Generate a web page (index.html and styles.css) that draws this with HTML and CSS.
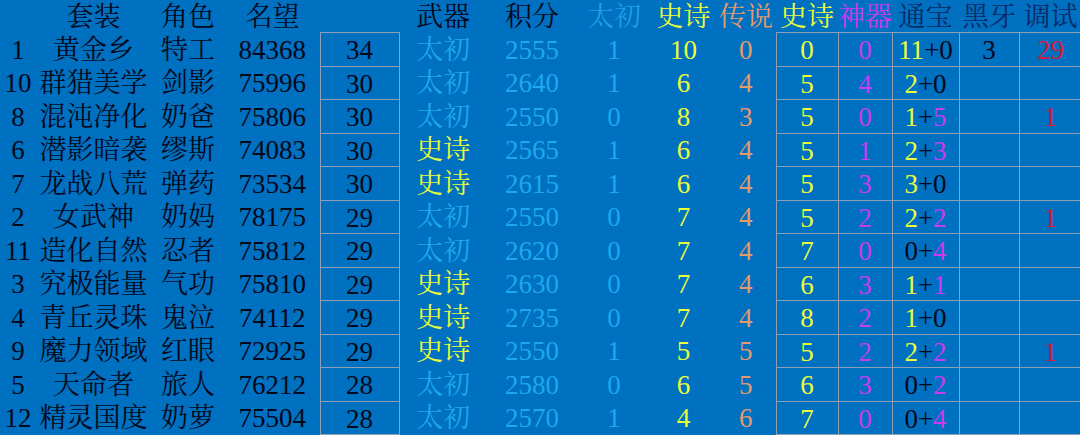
FILE: index.html
```html
<!DOCTYPE html>
<html lang="zh-CN">
<head>
<meta charset="utf-8">
<title>套装</title>
<link rel="stylesheet" href="styles.css">
</head>
<body>
<table class="sheet">
<colgroup>
<col class="c1"><col class="c2"><col class="c3"><col class="c4"><col class="c5"><col class="c6"><col class="c7"><col class="c8"><col class="c9"><col class="c10"><col class="c11"><col class="c12"><col class="c13"><col class="c14"><col class="c15">
</colgroup>
<thead>
<tr class="head">
<th></th><th>套装</th><th>角色</th><th>名望</th><th></th><th>武器</th><th>积分</th><th class="lbh">太初</th><th class="ye">史诗</th><th class="or">传说</th><th class="ye">史诗</th><th class="mg">神器</th><th class="nv">通宝</th><th class="nv">黑牙</th><th class="nv">调试</th>
</tr>
</thead>
<tbody>
<tr><td>1</td><td>黄金乡</td><td>特工</td><td>84368</td><td class="b">34</td><td class="lb">太初</td><td class="lb">2555</td><td class="lb">1</td><td class="ye">10</td><td class="or">0</td><td class="b ye">0</td><td class="b mg">0</td><td class="b"><span class="ye">11</span>+0</td><td class="b">3</td><td class="b rd">29</td></tr>
<tr><td>10</td><td>群猎美学</td><td>剑影</td><td>75996</td><td class="b">30</td><td class="lb">太初</td><td class="lb">2640</td><td class="lb">1</td><td class="ye">6</td><td class="or">4</td><td class="b ye">5</td><td class="b mg">4</td><td class="b"><span class="ye">2</span>+0</td><td class="b"></td><td class="b rd"></td></tr>
<tr><td>8</td><td>混沌净化</td><td>奶爸</td><td>75806</td><td class="b">30</td><td class="lb">太初</td><td class="lb">2550</td><td class="lb">0</td><td class="ye">8</td><td class="or">3</td><td class="b ye">5</td><td class="b mg">0</td><td class="b"><span class="ye">1</span>+<span class="mg">5</span></td><td class="b"></td><td class="b rd">1</td></tr>
<tr><td>6</td><td>潜影暗袭</td><td>缪斯</td><td>74083</td><td class="b">30</td><td class="ye">史诗</td><td class="lb">2565</td><td class="lb">1</td><td class="ye">6</td><td class="or">4</td><td class="b ye">5</td><td class="b mg">1</td><td class="b"><span class="ye">2</span>+<span class="mg">3</span></td><td class="b"></td><td class="b rd"></td></tr>
<tr><td>7</td><td>龙战八荒</td><td>弹药</td><td>73534</td><td class="b">30</td><td class="ye">史诗</td><td class="lb">2615</td><td class="lb">1</td><td class="ye">6</td><td class="or">4</td><td class="b ye">5</td><td class="b mg">3</td><td class="b"><span class="ye">3</span>+0</td><td class="b"></td><td class="b rd"></td></tr>
<tr><td>2</td><td>女武神</td><td>奶妈</td><td>78175</td><td class="b">29</td><td class="lb">太初</td><td class="lb">2550</td><td class="lb">0</td><td class="ye">7</td><td class="or">4</td><td class="b ye">5</td><td class="b mg">2</td><td class="b"><span class="ye">2</span>+<span class="mg">2</span></td><td class="b"></td><td class="b rd">1</td></tr>
<tr><td>11</td><td>造化自然</td><td>忍者</td><td>75812</td><td class="b">29</td><td class="lb">太初</td><td class="lb">2620</td><td class="lb">0</td><td class="ye">7</td><td class="or">4</td><td class="b ye">7</td><td class="b mg">0</td><td class="b">0+<span class="mg">4</span></td><td class="b"></td><td class="b rd"></td></tr>
<tr><td>3</td><td>究极能量</td><td>气功</td><td>75810</td><td class="b">29</td><td class="ye">史诗</td><td class="lb">2630</td><td class="lb">0</td><td class="ye">7</td><td class="or">4</td><td class="b ye">6</td><td class="b mg">3</td><td class="b"><span class="ye">1</span>+<span class="mg">1</span></td><td class="b"></td><td class="b rd"></td></tr>
<tr><td>4</td><td>青丘灵珠</td><td>鬼泣</td><td>74112</td><td class="b">29</td><td class="ye">史诗</td><td class="lb">2735</td><td class="lb">0</td><td class="ye">7</td><td class="or">4</td><td class="b ye">8</td><td class="b mg">2</td><td class="b"><span class="ye">1</span>+0</td><td class="b"></td><td class="b rd"></td></tr>
<tr><td>9</td><td>魔力领域</td><td>红眼</td><td>72925</td><td class="b">29</td><td class="ye">史诗</td><td class="lb">2550</td><td class="lb">1</td><td class="ye">5</td><td class="or">5</td><td class="b ye">5</td><td class="b mg">2</td><td class="b"><span class="ye">2</span>+<span class="mg">2</span></td><td class="b"></td><td class="b rd">1</td></tr>
<tr><td>5</td><td>天命者</td><td>旅人</td><td>76212</td><td class="b">28</td><td class="lb">太初</td><td class="lb">2580</td><td class="lb">0</td><td class="ye">6</td><td class="or">5</td><td class="b ye">6</td><td class="b mg">3</td><td class="b">0+<span class="mg">2</span></td><td class="b"></td><td class="b rd"></td></tr>
<tr><td>12</td><td>精灵国度</td><td>奶萝</td><td>75504</td><td class="b">28</td><td class="lb">太初</td><td class="lb">2570</td><td class="lb">1</td><td class="ye">4</td><td class="or">6</td><td class="b ye">7</td><td class="b mg">0</td><td class="b">0+<span class="mg">4</span></td><td class="b"></td><td class="b rd"></td></tr>
</tbody>
</table>
</body>
</html>
```
FILE: styles.css
```css
html, body {
  margin: 0;
  padding: 0;
  background: #0070c0;
  overflow: hidden;
}
body {
  width: 1080px;
  height: 435px;
}
.sheet {
  border-collapse: collapse;
  table-layout: fixed;
  width: 1082px;
  font-family: "Liberation Serif", "Noto Serif CJK SC", "Noto Sans CJK SC", serif;
  font-size: 27px;
  color: #03081a;
}
.c1 { width: 36px; }
.c2 { width: 115px; }
.c3 { width: 74px; }
.c4 { width: 95px; }
.c5 { width: 79px; }
.c6 { width: 88px; }
.c7 { width: 90px; }
.c8 { width: 74px; }
.c9 { width: 65px; }
.c10 { width: 60px; }
.c11 { width: 62px; }
.c12 { width: 54px; }
.c13 { width: 67px; }
.c14 { width: 60px; }
.c15 { width: 63px; }
th, td {
  padding: 0;
  text-align: center;
  white-space: nowrap;
  overflow: hidden;
  font-weight: normal;
}
.head th {
  height: 30px;
  padding-top: 2px;
  line-height: 30px;
  vertical-align: top;
}
tbody td {
  height: 29.5px;
  padding-top: 3px;
  line-height: 29px;
  vertical-align: top;
}
.b {
  border: 1px solid #8fa0b4;
}
.lb { color: #1ea8ee; }
.lbh { color: #1f9ee6; }
.ye { color: #eaff3a; }
.or { color: #e39a6c; }
.mg { color: #c83cf2; }
.nv { color: #0a2a66; }
.rd { color: #d21c3c; }
```
